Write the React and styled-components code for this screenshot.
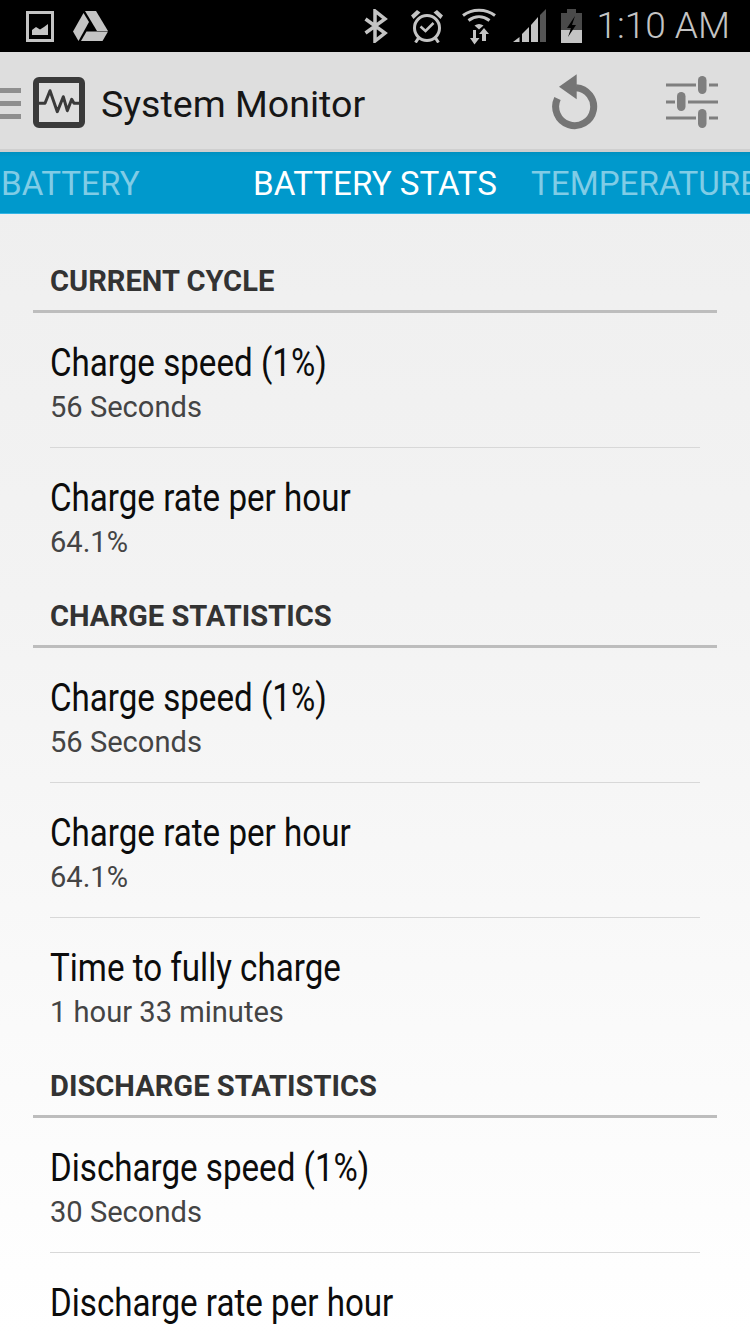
import React from "react";
import styled, { createGlobalStyle } from "styled-components";

const GlobalStyle = createGlobalStyle`
  html, body {
    margin: 0;
    padding: 0;
    background: #fff;
  }
  body {
    font-family: Roboto, "Liberation Sans", sans-serif;
  }
`;

const Screen = styled.div`
  width: 750px;
  height: 1333px;
  overflow: hidden;
  display: flex;
  flex-direction: column;
  background: linear-gradient(#ededed 0%, #f3f3f3 45%, #ffffff 100%);
`;

const StatusBar = styled.div`
  height: 52px;
  flex: none;
  background: #000;
  display: flex;
  align-items: center;
  padding: 0 20px 0 26px;
  color: #c4c4c4;
`;

const StatusGroup = styled.div`
  display: flex;
  align-items: center;
  margin-left: ${(p) => (p.$right ? "auto" : "0")};
`;

const StatusSlot = styled.div`
  display: flex;
  margin-right: ${(p) => p.$after}px;
`;

const Clock = styled.span`
  font-size: 37px;
  font-weight: 300;
  line-height: 52px;
  white-space: nowrap;
`;

const Toolbar = styled.div`
  height: 97px;
  flex: none;
  box-sizing: border-box;
  padding-top: 3px;
  background: #dedede;
  display: flex;
  align-items: center;
`;

const ToolbarEdge = styled.div`
  height: 3px;
  flex: none;
  background: #cfcfcf;
`;

const Hamburger = styled.div`
  width: 21px;
  height: 31px;
  margin: 3px 12px 0 0;
  display: flex;
  flex-direction: column;
  justify-content: space-between;
  span {
    display: block;
    height: 5px;
    background: #8f8f8f;
  }
`;

const Title = styled.h1`
  margin: 4px 0 0 16px;
  font-size: 37.6px;
  font-weight: 400;
  color: #161616;
  white-space: nowrap;
`;

const Actions = styled.div`
  margin-left: auto;
  display: flex;
  align-items: center;
  gap: 68px;
  padding-right: 32px;
`;

const Tabs = styled.div`
  height: 59px;
  flex: none;
  padding-top: 2px;
  background: linear-gradient(#0090bf 0, #0099cc 5px);
  border-bottom: 1px solid #33b5e5;
  display: flex;
  align-items: center;
  overflow: hidden;
  font-size: 33.2px;
  white-space: nowrap;
`;

const Tab = styled.div`
  flex: none;
  width: ${(p) => p.$width}px;
  margin-left: ${(p) => p.$offset || 0}px;
  color: ${(p) => (p.$active ? "#ffffff" : "#80cce6")};
`;

const Content = styled.div`
  padding-top: 34px;
`;

const SectionHeader = styled.div`
  height: 65px;
  box-sizing: border-box;
  margin: 0 33px;
  padding: 14px 0 0 17px;
  font-size: 29.1px;
  line-height: 39px;
  font-weight: 700;
  color: #333333;
  border-bottom: 3px solid #bdbdbd;
`;

const Item = styled.div`
  height: 135px;
  box-sizing: border-box;
  margin: 0 50px;
  padding-top: 27px;
  border-bottom: ${(p) => (p.$last ? "0" : "1px solid #d8d8d8")};
`;

const ItemTitle = styled.div`
  font-size: 38px;
  line-height: 47px;
  color: #0c0c0c;
  transform: scaleX(0.872);
  transform-origin: left center;
  white-space: nowrap;
`;

const ItemValue = styled.div`
  font-size: 29.1px;
  line-height: 40px;
  color: #444444;
  white-space: nowrap;
`;

const sections = [
  {
    title: "CURRENT CYCLE",
    items: [
      ["Charge speed (1%)", "56 Seconds"],
      ["Charge rate per hour", "64.1%"],
    ],
  },
  {
    title: "CHARGE STATISTICS",
    items: [
      ["Charge speed (1%)", "56 Seconds"],
      ["Charge rate per hour", "64.1%"],
      ["Time to fully charge", "1 hour 33 minutes"],
    ],
  },
  {
    title: "DISCHARGE STATISTICS",
    items: [
      ["Discharge speed (1%)", "30 Seconds"],
      ["Discharge rate per hour", "110%"],
    ],
  },
];

function GalleryIcon() {
  return (
    <svg width="28" height="31" viewBox="0 0 28 31">
      <rect x="1.5" y="1.5" width="25" height="28" fill="none" stroke="#c4c4c4" strokeWidth="3" />
      <path d="M6 24v-5l4-3 4 2.5 4-2.5 4-3v11z" fill="#c4c4c4" />
    </svg>
  );
}

function DriveIcon() {
  return (
    <svg width="36" height="31" viewBox="0 0 36 31">
      <path d="M12 0h11l12 20H24z" fill="#c4c4c4" />
      <path d="M10.5 2L0 20.5 5.5 30 16 11z" fill="#c4c4c4" />
      <path d="M8 30l5.5-9.5H35L29.5 30z" fill="#c4c4c4" />
    </svg>
  );
}

function BluetoothIcon() {
  return (
    <svg width="24" height="34" viewBox="0 0 24 34">
      <path d="M1.5 10L21 24l-10 8V2l10 8L1.5 24" fill="none" stroke="#c4c4c4" strokeWidth="3.5" />
    </svg>
  );
}

function AlarmIcon() {
  return (
    <svg width="32" height="34" viewBox="0 0 32 34">
      <circle cx="16" cy="19" r="12.5" fill="none" stroke="#c4c4c4" strokeWidth="3" />
      <path d="M9.5 17.5l5 4.5 8-8" fill="none" stroke="#c4c4c4" strokeWidth="2.5" />
      <path d="M0 6.5L6 1l3.500 2.500L2.500 10zM32 6.500L26 1l-3.500 2.500L29.500 10z" fill="#c4c4c4" />
      <path d="M7.5 29l-3 4.5M24.500 29l3 4.500" stroke="#c4c4c4" strokeWidth="3" />
    </svg>
  );
}

function WifiIcon() {
  return (
    <svg width="34" height="37" viewBox="0 0 34 37">
      <path d="M1 7.5C10 .5 24 .5 33 7.5" fill="none" stroke="#c4c4c4" strokeWidth="3" />
      <path d="M6.5 12.5C13 7.5 21 7.5 27.5 12.5" fill="none" stroke="#c4c4c4" strokeWidth="3" />
      <path d="M12.5 17.5c3-2 6-2 9 0L17 21.5z" fill="#c4c4c4" />
      <path d="M11 22h3v8h3.5L12.5 36.5 8 30h3z" fill="#c4c4c4" />
      <path d="M20 33v-7h-3l5-6 5 6h-3v7z" fill="#c4c4c4" />
    </svg>
  );
}

function SignalIcon() {
  return (
    <svg width="33" height="34" viewBox="0 0 33 34">
      <path d="M0 33l6.5-5v5z" fill="#c4c4c4" />
      <path d="M9 33V25l7-7v15z" fill="#c4c4c4" />
      <path d="M18 33V16l7-8v25z" fill="#c4c4c4" />
      <path d="M27 33V6l6-6v33z" fill="#555555" />
    </svg>
  );
}

function BatteryIcon() {
  return (
    <svg width="21" height="34" viewBox="0 0 21 34">
      <path d="M6 0h9v4h6v30H0V4h6z" fill="#4a4a4a" />
      <path d="M0 21h21v13H0z" fill="#c4c4c4" />
      <path d="M14 7L6 19h4l-3 9 8-12h-4z" fill="#000" />
    </svg>
  );
}

function MonitorIcon() {
  return (
    <svg width="52" height="51" viewBox="0 0 52 51">
      <rect x="3" y="3" width="46" height="45" rx="3" fill="none" stroke="#3a3a3a" strokeWidth="6" />
      <path
        d="M6 26.3h6L17 13.7l7.3 21 6-15 4 14 4.4-11.4 2.3 4h5"
        fill="none"
        stroke="#3a3a3a"
        strokeWidth="3"
        strokeLinejoin="round"
      />
    </svg>
  );
}

function ReloadIcon() {
  return (
    <svg width="46" height="56" viewBox="0 0 46 56">
      <path d="M5.5 24.5A19 19 0 1 0 24 13.7" fill="none" stroke="#757575" strokeWidth="7" />
      <path d="M24.7.3v25L7 12.7z" fill="#757575" />
    </svg>
  );
}

function SlidersIcon() {
  return (
    <svg width="52" height="52" viewBox="0 0 52 52">
      <path d="M0 9h30M43 9h9M0 26h9M22 26h30M0 42h30M43 42h9" stroke="#7f7f7f" strokeWidth="3" />
      <rect x="32" y="0" width="8.5" height="18" rx="4.2" fill="#7f7f7f" />
      <rect x="11" y="16" width="8.5" height="19" rx="4.2" fill="#7f7f7f" />
      <rect x="32" y="33" width="8.5" height="19" rx="4.2" fill="#7f7f7f" />
    </svg>
  );
}

export default function App() {
  return (
    <Screen>
      <GlobalStyle />
      <StatusBar>
        <StatusGroup>
          <StatusSlot $after={19}>
            <GalleryIcon />
          </StatusSlot>
          <DriveIcon />
        </StatusGroup>
        <StatusGroup $right>
          <StatusSlot $after={23}>
            <BluetoothIcon />
          </StatusSlot>
          <StatusSlot $after={19}>
            <AlarmIcon />
          </StatusSlot>
          <StatusSlot $after={17}>
            <WifiIcon />
          </StatusSlot>
          <StatusSlot $after={15}>
            <SignalIcon />
          </StatusSlot>
          <StatusSlot $after={15}>
            <BatteryIcon />
          </StatusSlot>
          <Clock>1:10 AM</Clock>
        </StatusGroup>
      </StatusBar>
      <Toolbar>
        <Hamburger>
          <span />
          <span />
          <span />
        </Hamburger>
        <MonitorIcon />
        <Title>System Monitor</Title>
        <Actions>
          <ReloadIcon />
          <SlidersIcon />
        </Actions>
      </Toolbar>
      <ToolbarEdge />
      <Tabs>
        <Tab $offset={1} $width={252}>BATTERY</Tab>
        <Tab $active $width={278}>BATTERY STATS</Tab>
        <Tab $width={260}>TEMPERATURE</Tab>
      </Tabs>
      <Content>
        {sections.map((section) => (
          <section key={section.title}>
            <SectionHeader>{section.title}</SectionHeader>
            {section.items.map(([label, value], i) => (
              <Item key={label} $last={i === section.items.length - 1}>
                <ItemTitle>{label}</ItemTitle>
                <ItemValue>{value}</ItemValue>
              </Item>
            ))}
          </section>
        ))}
      </Content>
    </Screen>
  );
}
